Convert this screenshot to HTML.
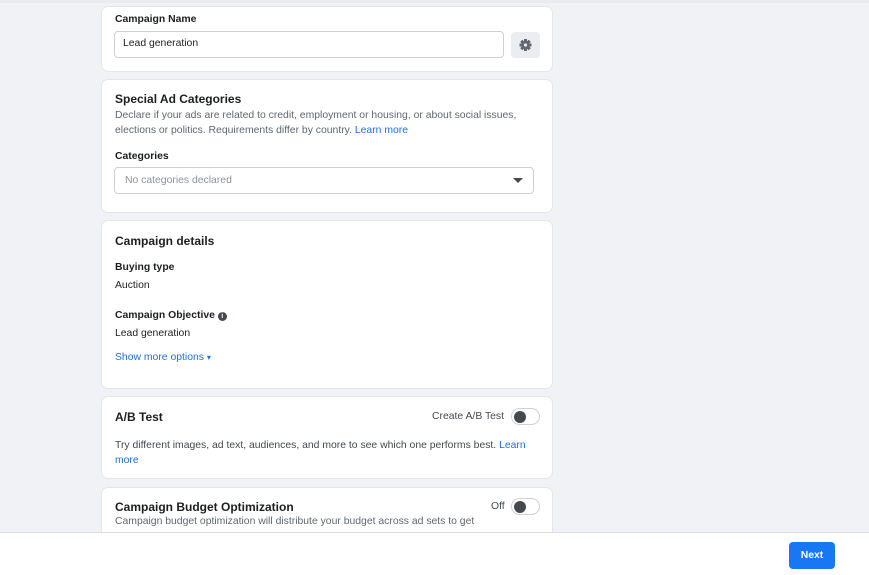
<!DOCTYPE html>
<html><head><style>
*{margin:0;padding:0;box-sizing:border-box}
body{width:869px;height:575px;background:#f0f2f5;font-family:"Liberation Sans",Arial,sans-serif;color:#1c1e21;position:relative;overflow:hidden;font-size:10.4px}
.card{position:absolute;left:102px;width:450px;background:#fff;border-radius:6px;box-shadow:0 0 0 1px #e4e6ea}
.a{position:absolute;white-space:nowrap}
.b{font-weight:bold}
.h{font-weight:bold;font-size:12px}
.g{color:#606770}
.l{color:#216fdb}
.tog{position:absolute;width:29px;height:17px;border:1px solid #ccd0d5;border-radius:9px;background:#fff}
.tog:after{content:"";position:absolute;left:2px;top:2px;width:12px;height:12px;border-radius:50%;background:#444950}
</style></head><body>
<div style="position:absolute;left:0;top:0;width:869px;height:3px;background:#e9ebee"></div>
<div class="card" style="top:7px;height:64px">
 <div class="a b" style="left:13px;top:7px">Campaign Name</div>
 <div class="a" style="left:12px;top:24px;width:390px;height:27px;border:1px solid #ccd0d5;border-radius:4px"></div>
 <div class="a" style="left:21px;top:31px">Lead generation</div>
 <div class="a" style="left:409px;top:25px;width:29px;height:26px;background:#ebedf0;border-radius:4px">
  <svg width="29" height="26" viewBox="0 0 29 26"><g transform="translate(14.5,13)" fill="#606770"><circle r="4.2"/><g id="t"><rect x="-1.5" y="-6" width="3" height="12"/></g><rect x="-1.5" y="-6" width="3" height="12" transform="rotate(45)"/><rect x="-1.5" y="-6" width="3" height="12" transform="rotate(90)"/><rect x="-1.5" y="-6" width="3" height="12" transform="rotate(135)"/><circle r="1.6" fill="#ebedf0"/></g></svg>
 </div>
</div>
<div class="card" style="top:80px;height:132px">
 <div class="a h" style="left:13px;top:12px">Special Ad Categories</div>
 <div class="a g" style="left:13px;top:28px;line-height:15px">Declare if your ads are related to credit, employment or housing, or about social issues,<br>elections or politics. Requirements differ by country. <span class="l">Learn more</span></div>
 <div class="a b" style="left:13px;top:71px">Categories</div>
 <div class="a" style="left:12px;top:87px;width:420px;height:27px;border:1px solid #ccd0d5;border-radius:4px"></div>
 <div class="a" style="left:23px;top:95px;color:#8d949e">No categories declared</div>
 <div class="a" style="left:411px;top:98px;width:0;height:0;border-left:5px solid transparent;border-right:5px solid transparent;border-top:5px solid #444950"></div>
</div>
<div class="card" style="top:221px;height:167px">
 <div class="a h" style="left:13px;top:13px">Campaign details</div>
 <div class="a b" style="left:13px;top:41px">Buying type</div>
 <div class="a" style="left:13px;top:59px">Auction</div>
 <div class="a b" style="left:13px;top:89px">Campaign Objective <span style="display:inline-block;width:9px;height:9px;border-radius:50%;background:#444950;color:#fff;font-size:7px;text-align:center;line-height:9px;vertical-align:0">i</span></div>
 <div class="a" style="left:13px;top:107px">Lead generation</div>
 <div class="a l" style="left:13px;top:131px">Show more options <span style="font-size:8px">▾</span></div>
</div>
<div class="card" style="top:397px;height:81px">
 <div class="a h" style="left:13px;top:13px">A/B Test</div>
 <div class="a" style="left:330px;top:14px;color:#444950">Create A/B Test</div>
 <div class="tog" style="left:409px;top:11px"></div>
 <div class="a" style="left:13px;top:41px;line-height:15px;color:#444950">Try different images, ad text, audiences, and more to see which one performs best. <span class="l">Learn</span><br><span class="l">more</span></div>
</div>
<div class="card" style="top:488px;height:60px">
 <div class="a h" style="left:13px;top:12px">Campaign Budget Optimization</div>
 <div class="a" style="left:389px;top:13px;color:#444950">Off</div>
 <div class="tog" style="left:409px;top:10px"></div>
 <div class="a g" style="left:13px;top:28px">Campaign budget optimization will distribute your budget across ad sets to get</div>
</div>
<div style="position:absolute;left:0;top:532px;width:869px;height:43px;background:#fff;border-top:1px solid #dadde1"></div>
<div class="a b" style="left:789px;top:542px;width:46px;height:27px;background:#1877f2;color:#fff;border-radius:4px;text-align:center;line-height:27px">Next</div>
</body></html>
